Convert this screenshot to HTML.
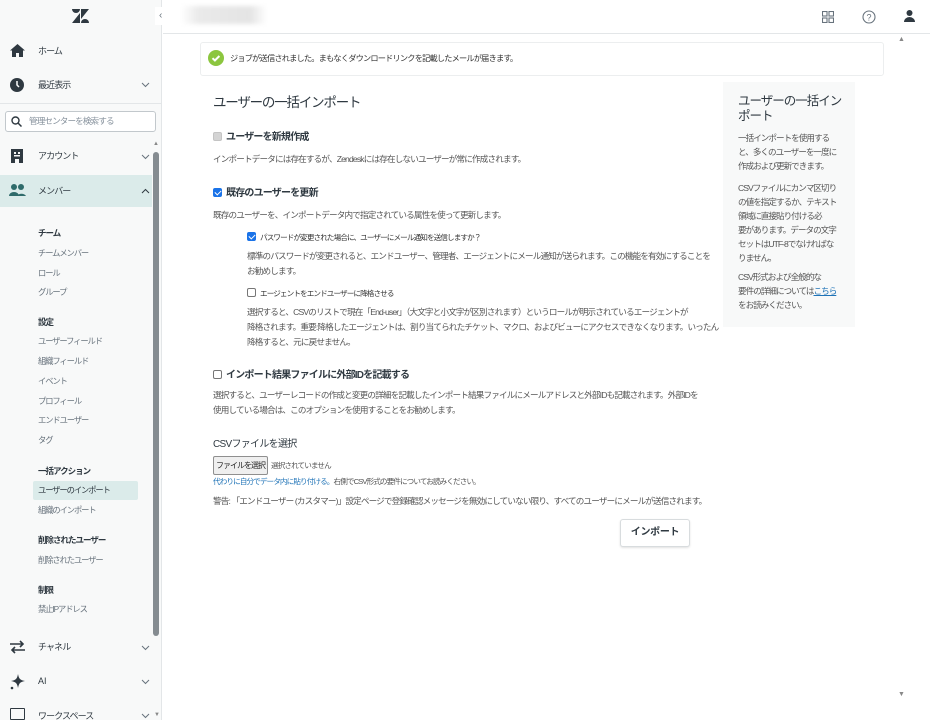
<!DOCTYPE html>
<html><head><meta charset="utf-8">
<style>
*{margin:0;padding:0;box-sizing:border-box}
body{width:930px;height:720px;overflow:hidden;background:#fff;font-family:"Liberation Sans","Noto Sans CJK JP",sans-serif;color:#2f3941;position:relative}
.a{position:absolute;white-space:nowrap}
#side{position:absolute;left:0;top:0;width:162px;height:720px;background:#f8f9f9;border-right:1px solid #e3e6e8;overflow:hidden}
.nav{font-size:9px;color:#2f3941;line-height:14px;letter-spacing:-0.9px}
.sub{font-size:8.3px;color:#68737d;line-height:14px;left:38px;letter-spacing:-1.1px}
.hd{font-size:8.5px;font-weight:bold;color:#2f3941;line-height:14px;left:38px;letter-spacing:-1px}
.chev{left:141px}
.t{font-size:8.6px;color:#555;line-height:15px;letter-spacing:-0.85px}
.s{font-size:7.6px;color:#333;letter-spacing:-0.9px}
.b{font-size:10px;font-weight:bold;color:#2f3941;letter-spacing:-0.8px}
.cb{display:inline-block;width:9px;height:9px;border:1px solid #767676;border-radius:2px;background:#fff;vertical-align:-1px;margin-right:4px;position:relative}
.cb.on{background:#1a73e8;border-color:#1a73e8}
.cb.on:after{content:"";position:absolute;left:2px;top:0px;width:3px;height:5px;border:solid #fff;border-width:0 1.5px 1.5px 0;transform:rotate(45deg)}
.cb.dis{background:#d4d4d4;border-color:#c4c4c4}
.rp{font-size:8.6px;color:#555;line-height:14px;letter-spacing:-1px}
</style></head><body>
<div id="side">
  <svg class="a" style="left:72px;top:9px" width="17" height="14" viewBox="0 0 17 14"><path d="M0 0h8A4 4 0 0 1 0 0z" fill="#2f3941"/><path d="M9 0h8L9 10z" fill="#2f3941"/><path d="M8 4v10H0z" fill="#2f3941"/><path d="M9 14a4 4 0 0 1 8 0z" fill="#2f3941"/></svg>
  <svg class="a" style="left:10px;top:44px" width="15" height="13" viewBox="0 0 15 13"><path d="M7.5 0L0 6.5h2V13h4V9h3v4h4V6.5h2z" fill="#2f3941"/></svg>
  <div class="a nav" style="left:38px;top:44px">ホーム</div>
  <svg class="a" style="left:10px;top:78px" width="14" height="14"><circle cx="7" cy="7" r="7" fill="#2f3941"/><path d="M7 3v4l2 2" stroke="#fff" stroke-width="1.5" fill="none"/></svg>
  <div class="a nav" style="left:38px;top:78px">最近表示</div>
  <svg class="a chev" style="top:82px" width="9" height="6"><path d="M1 1l3.5 3.5L8 1" stroke="#68737d" fill="none"/></svg>
  <div class="a" style="left:0;top:103px;width:162px;border-top:1px solid #e3e6e8"></div>
  <div class="a" style="left:5px;top:111px;width:151px;height:21px;border:1px solid #c2c8cc;border-radius:3px;background:#fff"></div>
  <svg class="a" style="left:11px;top:116px" width="11" height="11"><circle cx="4.5" cy="4.5" r="3.5" stroke="#2f3941" stroke-width="1.4" fill="none"/><path d="M7 7l3.5 3.5" stroke="#2f3941" stroke-width="1.5"/></svg>
  <div class="a" style="left:29px;top:115px;font-size:8.6px;color:#87929d;letter-spacing:-0.9px">管理センターを検索する</div>
  <svg class="a" style="left:11px;top:149px" width="12" height="14"><path d="M0 0h12v14H8v-4H4v4H0z" fill="#2f3941"/><rect x="3" y="3" width="2" height="2" fill="#f8f9f9"/><rect x="7" y="3" width="2" height="2" fill="#f8f9f9"/><rect x="3" y="6" width="6" height="1.5" fill="#f8f9f9"/></svg>
  <div class="a nav" style="left:38px;top:149px">アカウント</div>
  <svg class="a chev" style="top:154px" width="9" height="6"><path d="M1 1l3.5 3.5L8 1" stroke="#68737d" fill="none"/></svg>
  <div class="a" style="left:0;top:175px;width:152px;height:32px;background:#dbebea"></div>
  <svg class="a" style="left:9px;top:184px" width="17" height="12"><circle cx="5" cy="3" r="3" fill="#2f6b6b"/><circle cx="12" cy="3" r="3" fill="#2f6b6b"/><path d="M0 12a5 4 0 0 1 10 0z M8 12a5 4 0 0 1 9 0z" fill="#2f6b6b"/></svg>
  <div class="a nav" style="left:38px;top:184px">メンバー</div>
  <svg class="a chev" style="top:188px" width="9" height="6"><path d="M1 5l3.5-3.5L8 5" stroke="#2f3941" fill="none"/></svg>
  <div class="a hd" style="top:226px">チーム</div>
  <div class="a sub" style="top:246px">チームメンバー</div>
  <div class="a sub" style="top:266px">ロール</div>
  <div class="a sub" style="top:285px">グループ</div>
  <div class="a hd" style="top:315px">設定</div>
  <div class="a sub" style="top:334px">ユーザーフィールド</div>
  <div class="a sub" style="top:354px">組織フィールド</div>
  <div class="a sub" style="top:374px">イベント</div>
  <div class="a sub" style="top:394px">プロフィール</div>
  <div class="a sub" style="top:413px">エンドユーザー</div>
  <div class="a sub" style="top:433px">タグ</div>
  <div class="a hd" style="top:464px">一括アクション</div>
  <div class="a" style="left:33px;top:481px;width:105px;height:19px;background:#dbebea;border-radius:2px"></div>
  <div class="a sub" style="top:483px;color:#2f3941">ユーザーのインポート</div>
  <div class="a sub" style="top:503px">組織のインポート</div>
  <div class="a hd" style="top:533px">削除されたユーザー</div>
  <div class="a sub" style="top:553px">削除されたユーザー</div>
  <div class="a hd" style="top:583px">制限</div>
  <div class="a sub" style="top:602px">禁止IPアドレス</div>
  <svg class="a" style="left:10px;top:640px" width="15" height="14"><path d="M0 4h13M10 1l3 3-3 3M15 10H2M5 7l-3 3 3 3" stroke="#2f3941" stroke-width="1.6" fill="none"/></svg>
  <div class="a nav" style="left:38px;top:640px">チャネル</div>
  <svg class="a chev" style="top:645px" width="9" height="6"><path d="M1 1l3.5 3.5L8 1" stroke="#68737d" fill="none"/></svg>
  <svg class="a" style="left:9px;top:673px" width="17" height="17"><path d="M9 1C10 6 11 7 16 8 11 9 10 10 9 15 8 10 7 9 2 8 7 7 8 6 9 1z" fill="#2f3941"/><circle cx="3" cy="15" r="1.3" fill="#2f3941"/></svg>
  <div class="a nav" style="left:38px;top:674px;letter-spacing:0">AI</div>
  <svg class="a chev" style="top:679px" width="9" height="6"><path d="M1 1l3.5 3.5L8 1" stroke="#68737d" fill="none"/></svg>
  <div class="a" style="left:10px;top:708px;width:15px;height:12px;border:1.6px solid #2f3941;border-radius:1px"></div>
  <div class="a nav" style="left:38px;top:709px">ワークスペース</div>
  <svg class="a chev" style="top:713px" width="9" height="6"><path d="M1 1l3.5 3.5L8 1" stroke="#68737d" fill="none"/></svg>
  <div class="a" style="left:153px;top:152px;width:6px;height:484px;background:#858c91;border-radius:3px"></div>
  <div class="a" style="left:153px;top:141px;font-size:6px;color:#888">▲</div>
  <div class="a" style="left:154px;top:712px;font-size:6px;color:#888">▼</div>
</div>
<div class="a" style="left:155px;top:7px;width:16px;height:18px;background:#fff;border-radius:0 8px 8px 0;font-size:10px;color:#68737d;padding-left:4px;line-height:18px">‹</div>
<div class="a" style="left:181px;top:6px;width:86px;height:18px;background:linear-gradient(90deg,#fff,#eaeaea 20%,#e4e4e4 80%,#fff);filter:blur(2px)"></div>
<div class="a" style="left:163px;top:33px;width:767px;border-top:1px solid #e3e6e8"></div>
<svg class="a" style="left:822px;top:11px" width="12" height="12"><g fill="none" stroke="#68737d" stroke-width="1.1"><rect x=".5" y=".5" width="4.5" height="4.5"/><rect x="7" y=".5" width="4.5" height="4.5"/><rect x=".5" y="7" width="4.5" height="4.5"/><rect x="7" y="7" width="4.5" height="4.5"/></g></svg>
<svg class="a" style="left:862px;top:10px" width="14" height="14"><circle cx="7" cy="7" r="6" fill="none" stroke="#68737d" stroke-width="1.1"/><text x="7" y="10.5" font-size="9" text-anchor="middle" fill="#68737d" font-family="Liberation Sans">?</text></svg>
<svg class="a" style="left:904px;top:10px" width="11" height="12"><circle cx="5.5" cy="3" r="3" fill="#2f3941"/><path d="M0 12a5.5 5 0 0 1 11 0z" fill="#2f3941"/></svg>
<div class="a" style="left:898px;top:36px;font-size:7px;color:#888">▲</div>
<div class="a" style="left:898px;top:691px;font-size:7px;color:#888">▼</div>

<div class="a" style="left:200px;top:42px;width:684px;height:34px;border:1px solid #eceeef;border-radius:3px"></div>
<svg class="a" style="left:208px;top:50px" width="16" height="16"><circle cx="8" cy="8" r="8" fill="#8cc63f"/><path d="M4.5 8.2l2.4 2.3 4.5-4.5" stroke="#fff" stroke-width="2" fill="none"/></svg>
<div class="a s" style="left:230px;top:52px;font-size:8.2px;letter-spacing:-0.8px">ジョブが送信されました。まもなくダウンロードリンクを記載したメールが届きます。</div>

<div class="a" style="left:213px;top:91px;font-size:13.5px;color:#2f3941;letter-spacing:-1.2px">ユーザーの一括インポート</div>
<div class="a b" style="left:213px;top:128px"><span class="cb dis"></span>ユーザーを新規作成</div>
<div class="a t" style="left:213px;top:152px">インポートデータには存在するが、Zendeskには存在しないユーザーが常に作成されます。</div>
<div class="a b" style="left:213px;top:184px"><span class="cb on"></span>既存のユーザーを更新</div>
<div class="a t" style="left:213px;top:208px">既存のユーザーを、インポートデータ内で指定されている属性を使って更新します。</div>
<div class="a s" style="left:247px;top:232px"><span class="cb on"></span>パスワードが変更された場合に、ユーザーにメール通知を送信しますか？</div>
<div class="a t" style="left:247px;top:249px">標準のパスワードが変更されると、エンドユーザー、管理者、エージェントにメール通知が送られます。この機能を有効にすることを<br>お勧めします。</div>
<div class="a s" style="left:247px;top:288px"><span class="cb"></span>エージェントをエンドユーザーに降格させる</div>
<div class="a t" style="left:247px;top:305px">選択すると、CSVのリストで現在「End-user」（大文字と小文字が区別されます）というロールが明示されているエージェントが<br>降格されます。重要:降格したエージェントは、割り当てられたチケット、マクロ、およびビューにアクセスできなくなります。いったん<br>降格すると、元に戻せません。</div>
<div class="a b" style="left:213px;top:366px"><span class="cb"></span>インポート結果ファイルに外部IDを記載する</div>
<div class="a t" style="left:213px;top:388px">選択すると、ユーザーレコードの作成と変更の詳細を記載したインポート結果ファイルにメールアドレスと外部IDも記載されます。外部IDを<br>使用している場合は、このオプションを使用することをお勧めします。</div>
<div class="a" style="left:213px;top:435px;font-size:10px;color:#2f3941;letter-spacing:-0.7px">CSVファイルを選択</div>
<div class="a" style="left:213px;top:456px;width:55px;height:19px;border:1px solid #8f8f8f;border-radius:2px;background:#efefef;font-size:8px;line-height:17px;text-align:center;color:#222;letter-spacing:-1px">ファイルを選択</div>
<div class="a s" style="left:271px;top:460px;color:#555">選択されていません</div>
<div class="a s" style="left:213px;top:476px;color:#555"><span style="color:#1f73b7">代わりに自分でデータ内に貼り付ける。</span>右側でCSV形式の要件についてお読みください。</div>
<div class="a t" style="left:213px;top:494px">警告: 「エンドユーザー (カスタマー)」設定ページで登録確認メッセージを無効にしていない限り、すべてのユーザーにメールが送信されます。</div>
<div class="a" style="left:620px;top:519px;width:70px;height:28px;border:1px solid #d8dcde;border-radius:3px;background:#fff;box-shadow:0 1px 2px rgba(0,0,0,.12);font-size:10px;font-weight:bold;line-height:26px;text-align:center;color:#2f3941;letter-spacing:-0.3px">インポート</div>

<div class="a" style="left:723px;top:82px;width:132px;height:245px;background:#f8f9f9"></div>
<div class="a" style="left:738px;top:94px;font-size:12.5px;line-height:15px;color:#2f3941;letter-spacing:-1px">ユーザーの一括イン<br>ポート</div>
<div class="a rp" style="left:738px;top:131px">一括インポートを使用する<br>と、多くのユーザーを一度に<br>作成および更新できます。</div>
<div class="a rp" style="left:738px;top:181px">CSVファイルにカンマ区切り<br>の値を指定するか、テキスト<br>領域に直接貼り付ける必<br>要があります。データの文字<br>セットはUTF-8でなければな<br>りません。</div>
<div class="a rp" style="left:738px;top:270px">CSV形式および全般的な<br>要件の詳細については<span style="color:#1f73b7;text-decoration:underline">こちら</span><br>をお読みください。</div>
</body></html>
